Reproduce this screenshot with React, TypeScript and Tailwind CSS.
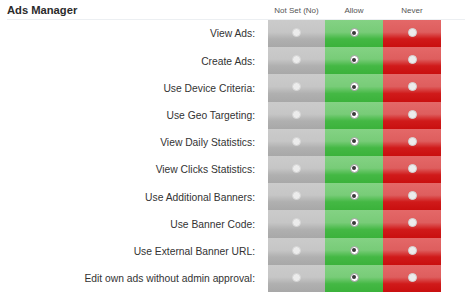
const permissions = [
  "View Ads:",
  "Create Ads:",
  "Use Device Criteria:",
  "Use Geo Targeting:",
  "View Daily Statistics:",
  "View Clicks Statistics:",
  "Use Additional Banners:",
  "Use Banner Code:",
  "Use External Banner URL:",
  "Edit own ads without admin approval:",
];

const Radio: React.FC<{ checked?: boolean }> = ({ checked }) => {
  if (checked) {
    return (
      <span className="flex h-[9px] w-[9px] items-center justify-center rounded-full border border-[#9a9a9a] bg-white">
        <span className="h-[4px] w-[4px] rounded-full bg-[#3a3a3a]" />
      </span>
    );
  }
  return <span className="h-[9px] w-[9px] rounded-full border border-[#d4d4d4] bg-[#ececec]" />;
};

const App: React.FC = () => {
  return (
    <div className="h-[300px] w-[465px] overflow-hidden bg-white font-['Liberation_Sans',Arial,sans-serif] text-[#333]">
      {/* Header */}
      <div className="ml-[7px] flex h-[20px] border-b border-[#eceff2]">
        <div className="w-[261px] pt-[4px] text-[11.2px] font-bold leading-[13px] text-[#2b2b2b]">Ads Manager</div>
        <div className="flex w-[57px] justify-center pt-[6px] text-[8px] leading-[9px] text-[#555]">Not Set (No)</div>
        <div className="flex w-[58px] justify-center pt-[6px] text-[8px] leading-[9px] text-[#555]">Allow</div>
        <div className="flex w-[58px] justify-center pt-[6px] text-[8px] leading-[9px] text-[#555]">Never</div>
      </div>

      {/* Rows */}
      <div className="ml-[7px] flex flex-col">
        {permissions.map((label) => (
          <div key={label} className="flex h-[27.2px]">
            <div className="flex w-[261px] items-center justify-end pr-[13px] pt-[1px] text-[10.3px] text-[#333]">
              {label}
            </div>
            <div className="flex w-[57px] justify-center pt-[8px] bg-[linear-gradient(to_bottom,#cbcbcb_0%,#c6c6c6_45%,#b0b0b0_70%,#a8a8a8_100%)]">
              <Radio />
            </div>
            <div className="flex w-[58px] justify-center pt-[8px] bg-[linear-gradient(to_bottom,#84d284_0%,#78cc78_45%,#44b844_70%,#3bb23b_100%)]">
              <Radio checked />
            </div>
            <div className="flex w-[58px] justify-center pt-[8px] bg-[linear-gradient(to_bottom,#e46868_0%,#de5e5e_45%,#d01a1a_70%,#c90f0f_100%)]">
              <Radio />
            </div>
          </div>
        ))}
      </div>
    </div>
  );
};

export default App;
